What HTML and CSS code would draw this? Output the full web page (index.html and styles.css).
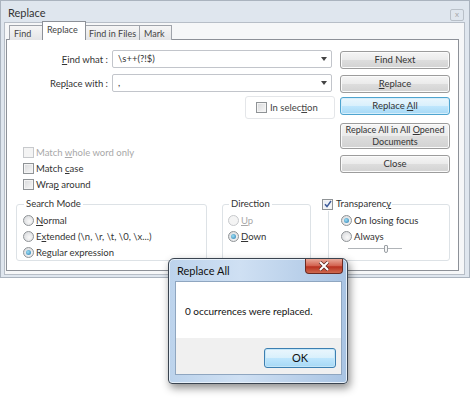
FILE: index.html
```html
<!DOCTYPE html>
<html lang="en">
<head>
  <meta charset="UTF-8">
  <title>Replace</title>
  <link rel="stylesheet" href="styles.css">
</head>
<body>
  <div class="window">
    <div class="titlebar">
      <span class="title">Replace</span>
      <span class="tclose">x</span>
    </div>
    <div class="client">
      <div class="tabs">
        <span class="tab t-find">Find</span>
        <span class="tab t-replace active">Replace</span>
        <span class="tab t-files">Find in Files</span>
        <span class="tab t-mark">Mark</span>
      </div>
      <div class="panel">
        <div class="top">
          <div class="left">
            <div class="form">
              <span class="lbl"><u>F</u>ind what :</span>
              <div class="combo">\s++(?!$)<span class="arrow"></span></div>
              <span class="lbl">Rep<u>l</u>ace with :</span>
              <div class="combo">,<span class="arrow"></span></div>
            </div>
            <div class="insel"><span class="cb"></span><span>In selec<u>t</u>ion</span></div>
            <div class="checks">
              <div class="opt disabled"><span class="cb"></span><span>Match <u>w</u>hole word only</span></div>
              <div class="opt"><span class="cb"></span><span>Match <u>c</u>ase</span></div>
              <div class="opt"><span class="cb"></span><span>Wra<u>p</u> around</span></div>
            </div>
          </div>
          <div class="buttons">
            <button class="btn">Find Next</button>
            <button class="btn b-replace"><u>R</u>eplace</button>
            <button class="btn focus b-all">Replace <u>A</u>ll</button>
            <button class="btn tall">Replace All in All <u>O</u>pened<br>Documents</button>
            <button class="btn b-close">Close</button>
          </div>
        </div>
        <div class="groups">
          <fieldset class="grp g-mode">
            <legend>Search Mode</legend>
            <div class="opt"><span class="rb"></span><span><u>N</u>ormal</span></div>
            <div class="opt"><span class="rb"></span><span>E<u>x</u>tended (\n, \r, \t, \0, \x...)</span></div>
            <div class="opt"><span class="rb on"></span><span>Re<u>g</u>ular expression</span></div>
          </fieldset>
          <fieldset class="grp g-dir">
            <legend>Direction</legend>
            <div class="opt disabled"><span class="rb"></span><span><u>U</u>p</span></div>
            <div class="opt"><span class="rb on"></span><span><u>D</u>own</span></div>
          </fieldset>
          <fieldset class="grp g-trans">
            <legend><span class="cb checked"><svg width="8" height="8" viewBox="0 0 8 8"><path d="M1 4.2 L3 6.6 L7 1" fill="none" stroke="#3d5a98" stroke-width="1.5"/></svg></span><span>Transparenc<u>y</u></span></legend>
            <div class="opt"><span class="rb on"></span><span>On losing focus</span></div>
            <div class="opt"><span class="rb"></span><span>Always</span></div>
            <div class="slider"><span class="thumb"></span></div>
          </fieldset>
        </div>
      </div>
    </div>
  </div>

  <div class="dialog">
    <div class="dtitle">
      <span>Replace All</span>
      <span class="dclose"><svg width="12" height="10" viewBox="0 0 12 10"><path d="M2 1 L10 9 M10 1 L2 9" stroke="#5a2a22" stroke-width="3.4"/><path d="M2 1 L10 9 M10 1 L2 9" stroke="#fff" stroke-width="2"/></svg></span>
    </div>
    <div class="dbody">0 occurrences were replaced.</div>
    <div class="dfoot"><button class="btn ok">OK</button></div>
  </div>
</body>
</html>
```

FILE: styles.css
```css
body {
  margin: 0;
  background: #fff;
  font-family: Lato, "Open Sans", sans-serif;
  font-size: 9.5px;
  color: #222;
}
u {
  text-decoration: underline;
}
.window {
  width: 470px;
  height: 278px;
  box-sizing: border-box;
  border: 1px solid #aab3be;
  background: #dfe6ee;
  padding: 0 4px 3px 3px;
}
.titlebar {
  height: 21px;
  display: flex;
  align-items: center;
  justify-content: space-between;
}
.title {
  font-size: 11px;
  color: #333;
  margin-left: 4px;
  margin-top: 2px;
}
.tclose {
  width: 12px;
  height: 10px;
  margin-top: 6px;
  margin-right: 1px;
  border: 1px solid #b9c0c8;
  border-radius: 2px;
  font-size: 8px;
  line-height: 9px;
  text-align: center;
  color: #aaa;
}
.client {
  height: 253px;
  box-sizing: border-box;
  background: #f6f7f8;
  border: 1px solid #b7bec7;
  padding-left: 1px;
}
.tabs {
  display: flex;
  align-items: flex-end;
  height: 17px;
  margin-left: 3px;
  margin-bottom: -1px;
}
.tab {
  height: 15px;
  box-sizing: border-box;
  border: 1px solid #a0a4ab;
  border-bottom: none;
  background: linear-gradient(#f6f6f6, #e4e5e7);
  color: #444;
  padding: 1px 0 0 4px;
  line-height: 13px;
  margin-right: -1px;
  white-space: nowrap;
  font-size: 9px;
}
.t-find { width: 35px; }
.t-replace { width: 44px; }
.t-files { width: 55px; padding-left: 3px; }
.t-mark { width: 33px; }
.tab.active {
  height: 19px;
  background: #fff;
  position: relative;
  z-index: 1;
  margin-left: -1px;
  margin-right: -1px;
  padding-top: 2px;
  line-height: 12px;
  border-color: #8d9198;
}
.panel {
  width: 453px;
  height: 232px;
  box-sizing: border-box;
  background: #fff;
  border: 1px solid #8d9198;
  padding: 10px 8px 0 5px;
}
.top {
  display: flex;
  gap: 8px;
}
.left {
  width: 320px;
}
.form {
  display: grid;
  grid-template-columns: 96px 220px;
  column-gap: 4px;
  row-gap: 6px;
  align-items: center;
}
.lbl {
  text-align: right;
  color: #333;
}
.combo {
  position: relative;
  height: 18px;
  box-sizing: border-box;
  border: 1px solid #c2c5cb;
  border-radius: 2px;
  padding-left: 5px;
  line-height: 15px;
  color: #333;
}
.arrow {
  position: absolute;
  right: 4px;
  top: 6px;
  border-left: 3px solid transparent;
  border-right: 3px solid transparent;
  border-top: 4px solid #444;
}
.insel {
  width: 90px;
  height: 23px;
  box-sizing: border-box;
  margin: 4px -3px 0 auto;
  border: 1px solid #e4e6e9;
  border-radius: 3px;
  display: flex;
  align-items: center;
  padding-left: 10px;
  color: #444;
}
.insel .cb {
  margin-right: 3px;
}
.checks {
  margin-top: 25px;
  margin-left: 11px;
}
.opt {
  height: 16px;
  display: flex;
  align-items: center;
  color: #333;
  white-space: nowrap;
}
.opt.disabled {
  color: #a8a8a8;
}
.cb {
  display: inline-flex;
  align-items: center;
  justify-content: center;
  flex: none;
  width: 11px;
  height: 11px;
  box-sizing: border-box;
  border: 1px solid #8f9396;
  background: linear-gradient(135deg, #d8d9db, #f8f8f8);
  box-shadow: inset 0 0 0 1px #f4f4f4;
  margin-right: 2px;
}
.disabled .cb, .disabled .rb {
  border-color: #c7c9cc;
  background: #f4f4f4;
}
.cb.checked {
  background: linear-gradient(135deg, #e4e9f2, #fbfcfd);
}
.rb {
  flex: none;
  width: 11px;
  height: 11px;
  box-sizing: border-box;
  border: 1px solid #8f9396;
  border-radius: 50%;
  background: radial-gradient(circle at 60% 60%, #f9f9f9, #d3d5d8);
  margin-right: 2px;
  display: inline-flex;
  align-items: center;
  justify-content: center;
}
.rb.on::after {
  content: "";
  width: 5px;
  height: 5px;
  border-radius: 50%;
  background: radial-gradient(circle at 40% 40%, #9be0f6, #2a78ad);
}
.buttons {
  width: 110px;
  display: flex;
  flex-direction: column;
  padding-top: 1px;
}
.btn {
  font-family: inherit;
  font-size: 9.5px;
  color: #333;
  height: 18px;
  padding: 0;
  border: 1px solid #9c9c9c;
  border-radius: 3px;
  background: linear-gradient(#f5f5f5 0%, #ebebeb 48%, #dddddd 52%, #d2d2d2 100%);
  box-shadow: inset 0 0 0 1px #fbfbfb;
  line-height: 14px;
}
.b-replace { margin-top: 6px; }
.b-all { margin-top: 4px; }
.btn.tall {
  height: 26px;
  margin-top: 8px;
  line-height: 12px;
  padding: 0 2px;
  font-size: 9px;
  white-space: nowrap;
}
.b-close { margin-top: 6px; }
.btn.focus {
  border-color: #4ea4cf;
  background: linear-gradient(#eaf6fd 0%, #d9f0fc 48%, #bee6fd 52%, #a7d9f5 100%);
  box-shadow: inset 0 0 0 1px #d6eefb;
}
.groups {
  display: flex;
  margin-top: 5px;
  margin-left: 4px;
}
.grp {
  margin: 0;
  height: 64px;
  box-sizing: border-box;
  border: 1px solid #dde2e6;
  border-radius: 3px;
  padding: 0 0 0 6px;
}
.grp legend {
  padding: 0 2px;
  margin-left: 1px;
  color: #333;
  line-height: 14px;
  display: flex;
  align-items: center;
}
.g-mode { width: 191px; }
.g-dir { width: 89px; margin-left: 15px; padding-left: 5px; }
.g-trans { width: 122px; margin-left: 17px; padding-left: 12px; }
.g-trans legend {
  margin-left: -19px;
  padding: 0 1px 0 0;
  background: #fff;
}
.g-trans .cb.checked {
  margin-right: 3px;
}
.grp .opt:first-of-type {
  margin-top: 1px;
}
.slider {
  width: 54px;
  height: 9px;
  margin-left: 7px;
  display: flex;
  align-items: center;
  background: linear-gradient(#fff 4px, #b0b4b8 4px, #b0b4b8 5px, #fff 5px);
}
.thumb {
  width: 4px;
  height: 8px;
  margin-left: 36px;
  box-sizing: border-box;
  border: 1px solid #9ba0a5;
  border-radius: 1px 1px 2px 2px;
  background: #f6f6f6;
}
.dialog {
  position: absolute;
  left: 168px;
  top: 258px;
  width: 180px;
  height: 126px;
  box-sizing: border-box;
  border: 1px solid #3a4450;
  border-radius: 6px 6px 4px 4px;
  background: linear-gradient(90deg, #bcd3ec, #cfe0f3 40%, #a9c4e3);
  box-shadow: 2px 4px 8px rgba(0, 0, 0, 0.45), inset 0 0 0 1px #e6f0fa;
  padding: 0 5px 8px 6px;
}
.dtitle {
  height: 22px;
  display: flex;
  align-items: center;
  padding-left: 2px;
  font-size: 11px;
  color: #111;
}
.dclose {
  position: absolute;
  right: 4px;
  top: 0;
  width: 38px;
  height: 15px;
  box-sizing: border-box;
  border: 1px solid #6b2a22;
  border-top: none;
  border-radius: 0 0 4px 4px;
  background: linear-gradient(#e9a99a, #d2604d 50%, #b8301f 55%, #cf6a4f);
  display: flex;
  align-items: center;
  justify-content: center;
}
.dbody {
  height: 57px;
  background: #fff;
  border: 1px solid #8fa6c0;
  border-bottom: none;
  box-sizing: border-box;
  padding: 23px 0 0 9px;
  font-size: 10px;
  color: #111;
}
.dfoot {
  height: 37px;
  background: #f0f0f0;
  border: 1px solid #8fa6c0;
  border-top: none;
  box-sizing: border-box;
  display: flex;
  justify-content: flex-end;
  align-items: flex-start;
  padding: 10px 5px 0 0;
}
.btn.ok {
  width: 72px;
  height: 20px;
  font-size: 11px;
  color: #111;
  border-color: #3c7fb1;
  background: linear-gradient(#eaf6fd 0%, #d9f0fc 48%, #bee6fd 52%, #a7d9f5 100%);
  box-shadow: inset 0 0 0 1px #c4e6f8;
}
```
